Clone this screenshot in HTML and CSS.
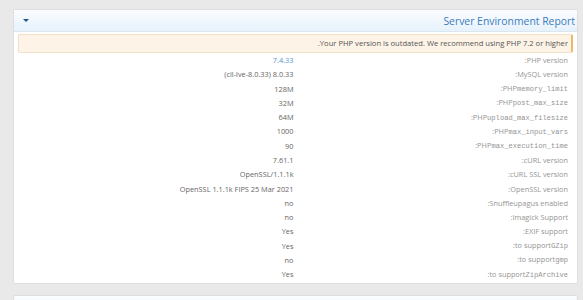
FILE: index.html
```html
<!DOCTYPE html>
<html lang="en" dir="rtl">
<head>
<meta charset="utf-8">
<title>Server Environment Report</title>
<link rel="stylesheet" href="styles.css">
</head>
<body>
<div class="block">
  <div class="block-header">
    <h3 class="block-title">Server Environment Report</h3>
    <span class="toggle"></span>
  </div>
  <div class="block-body">
    <div class="notice">Your PHP version is outdated. We recommend using PHP 7.2 or higher.</div>
    <table class="report">
      <tr><td class="lbl">PHP version:</td><td class="val"><a class="link">7.4.33</a></td></tr>
      <tr><td class="lbl">MySQL version:</td><td class="val">8.0.33 (cll-lve-8.0.33)</td></tr>
      <tr><td class="lbl">PHP<code>memory_limit</code>:</td><td class="val">128M</td></tr>
      <tr><td class="lbl">PHP<code>post_max_size</code>:</td><td class="val">32M</td></tr>
      <tr><td class="lbl">PHP<code>upload_max_filesize</code>:</td><td class="val">64M</td></tr>
      <tr><td class="lbl">PHP<code>max_input_vars</code>:</td><td class="val">1000</td></tr>
      <tr><td class="lbl">PHP<code>max_execution_time</code>:</td><td class="val">90</td></tr>
      <tr><td class="lbl">cURL version:</td><td class="val">7.61.1</td></tr>
      <tr><td class="lbl">cURL SSL version:</td><td class="val">OpenSSL/1.1.1k</td></tr>
      <tr><td class="lbl">OpenSSL version:</td><td class="val">OpenSSL 1.1.1k FIPS 25 Mar 2021</td></tr>
      <tr><td class="lbl">Snuffleupagus enabled:</td><td class="val">no</td></tr>
      <tr><td class="lbl">Imagick Support:</td><td class="val">no</td></tr>
      <tr><td class="lbl">EXIF support:</td><td class="val">Yes</td></tr>
      <tr><td class="lbl">to support<code>GZip</code>:</td><td class="val">Yes</td></tr>
      <tr><td class="lbl">to support<code>gmp</code>:</td><td class="val">no</td></tr>
      <tr><td class="lbl">to support<code>ZipArchive</code>:</td><td class="val">Yes</td></tr>
    </table>
  </div>
</div>
<div class="block block-next">
  <div class="block-header"></div>
</div>
</body>
</html>
```
FILE: styles.css
```css
html, body {
  margin: 0;
  padding: 0;
}
body {
  background: #e9e9e9;
  padding: 9px 5px 0 13px;
  font-family: "Open Sans", "Noto Sans", sans-serif;
  color: #555;
  direction: rtl;
  height: 300px;
  box-sizing: border-box;
  overflow: hidden;
}
.block {
  background: #fff;
  border: 1px solid #dedede;
  border-radius: 2px;
}
.block-header {
  height: 21px;
  display: flex;
  align-items: center;
  justify-content: space-between;
  padding: 0 2px 0 9px;
  background: linear-gradient(to bottom, #fbfdff, #e6f2fc);
  border-bottom: 1px solid #dbe6f0;
}
.block-title {
  margin: 0;
  font-weight: normal;
  font-size: 10.4px;
  color: #3d7bbb;
}
.toggle {
  width: 0;
  height: 0;
  border-left: 3.5px solid transparent;
  border-right: 3.5px solid transparent;
  border-top: 3.5px solid #245488;
}
.block-body {
  padding: 2px 4px 2px 4px;
}
.notice {
  background: #fdf3e7;
  border: 1px solid #f1e0ca;
  border-right: 2px solid #efb767;
  border-radius: 2px;
  font-size: 7.6px;
  line-height: 17px;
  padding: 0 3px;
  color: #555;
}
.report {
  width: 100%;
  border-collapse: collapse;
  font-size: 7.35px;
}
.report td {
  height: 14.27px;
  padding: 0;
  width: 50%;
  text-align: right;
  vertical-align: middle;
  line-height: 10px;
}
.lbl {
  color: #959595;
  padding-right: 5px !important;
}
.val {
  color: #666;
  padding-right: 2px !important;
}
.link {
  color: #5596cf;
}
code {
  font-family: "Liberation Mono", "DejaVu Sans Mono", monospace;
  font-size: 7.1px;
}
.block-next {
  margin-top: 11px;
  height: 4px;
  overflow: hidden;
}
```
